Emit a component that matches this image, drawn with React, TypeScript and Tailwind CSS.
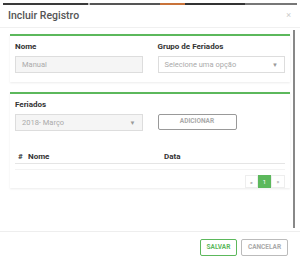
import React from "react";

const Label = ({ children }: { children: React.ReactNode }) => (
  <div className="text-[8px] font-bold text-[#333] leading-[10px] mb-[4px]">{children}</div>
);

const Caret = () => <span className="text-[6px] text-[#999]">▼</span>;

const App = () => {
  return (
    <div
      className="w-[300px] h-[261px] bg-white overflow-hidden flex flex-col"
      style={{ fontFamily: "Roboto, 'Liberation Sans', sans-serif" }}
    >
      {/* faixa da página ao fundo */}
      <div className="mt-[3px] mx-[3px] h-[2px] flex">
        <div className="w-[85px] bg-[#3a3a3a]" />
        <div className="w-[2px] bg-[#bbb]" />
        <div className="w-[70px] bg-[#555]" />
        <div className="w-[25px] bg-[#c8733a]" />
        <div className="w-[60px] bg-[#333]" />
        <div className="flex-1 bg-[#777]" />
      </div>

      {/* Cabeçalho */}
      <div className="h-[23px] flex items-center justify-between pl-[8px] pr-[9px] border-b border-[#f0f0f0]">
        <span className="text-[10.5px] text-[#555] font-medium">Incluir Registro</span>
        <span className="text-[9px] text-[#ccc]">×</span>
      </div>

      {/* Corpo */}
      <div className="flex h-[204px] border-b border-[#eee]">
        <div className="flex-1 pl-[10px] pt-[6px] flex flex-col gap-[10px]">
          {/* Card 1 */}
          <div className="border-t-2 border-[#5cb85c] shadow-[0_1px_2px_rgba(0,0,0,0.08)] px-[5px] pt-[6px] h-[48px]">
            <div className="grid grid-cols-2 gap-[15px]">
              <div>
                <Label>Nome</Label>
                <div className="h-[17px] border border-[#ddd] bg-[#f5f5f5] flex items-center px-[6px] text-[7.5px] text-[#aaa]">
                  Manual
                </div>
              </div>
              <div>
                <Label>Grupo de Feriados</Label>
                <div className="h-[17px] border border-[#ddd] bg-white flex items-center justify-between px-[6px] text-[7.5px] text-[#aaa]">
                  <span>Selecione uma opção</span>
                  <Caret />
                </div>
              </div>
            </div>
          </div>

          {/* Card 2 */}
          <div className="border-t-2 border-[#5cb85c] shadow-[0_1px_2px_rgba(0,0,0,0.08)] px-[5px] pt-[6px] h-[96px] flex flex-col">
            <div className="grid grid-cols-2 gap-[15px]">
              <div>
                <Label>Feriados</Label>
                <div className="h-[17px] border border-[#ddd] bg-[#f5f5f5] flex items-center justify-between px-[6px] text-[7.5px] text-[#aaa]">
                  <span>2018- Março</span>
                  <Caret />
                </div>
              </div>
              <div className="pt-[14px]">
                <div className="w-[79px] h-[16px] border border-[#999] rounded-[2px] flex items-center justify-center text-[6.5px] font-bold text-[#aaa]">
                  ADICIONAR
                </div>
              </div>
            </div>
            <div className="mt-[20px] flex items-center h-[14px] border-b border-[#e5e5e5] pl-[3px] text-[8px] font-bold text-[#333]">
              <span className="w-[10px]">#</span>
              <span className="w-[136px]">Nome</span>
              <span>Data</span>
            </div>
            <div className="mt-[5px] border-t border-[#f3f3f3]" />
            <div className="mt-[5px] flex justify-end">
              <div className="flex h-[13px] text-[6px]">
                <span className="w-[13px] border border-[#eee] flex items-center justify-center text-[#888]">«</span>
                <span className="w-[13px] bg-[#5cb85c] flex items-center justify-center text-white">1</span>
                <span className="w-[14px] border border-[#eee] flex items-center justify-center text-[#888]">»</span>
              </div>
            </div>
          </div>
        </div>
        <div className="w-[10px] pl-[3px] pt-[2px]">
          <div className="w-[2px] h-[198px] bg-[#888]" />
        </div>
      </div>

      {/* Rodapé */}
      <div className="flex justify-end gap-[4px] pr-[12px] pt-[7px]">
        <div className="w-[37px] h-[17px] border border-[#5cb85c] rounded-[2px] flex items-center justify-center text-[6.5px] font-bold text-[#5cb85c]">
          SALVAR
        </div>
        <div className="w-[47px] h-[17px] border border-[#bbb] rounded-[2px] flex items-center justify-center text-[6.5px] font-bold text-[#aaa]">
          CANCELAR
        </div>
      </div>
    </div>
  );
};

export default App;
